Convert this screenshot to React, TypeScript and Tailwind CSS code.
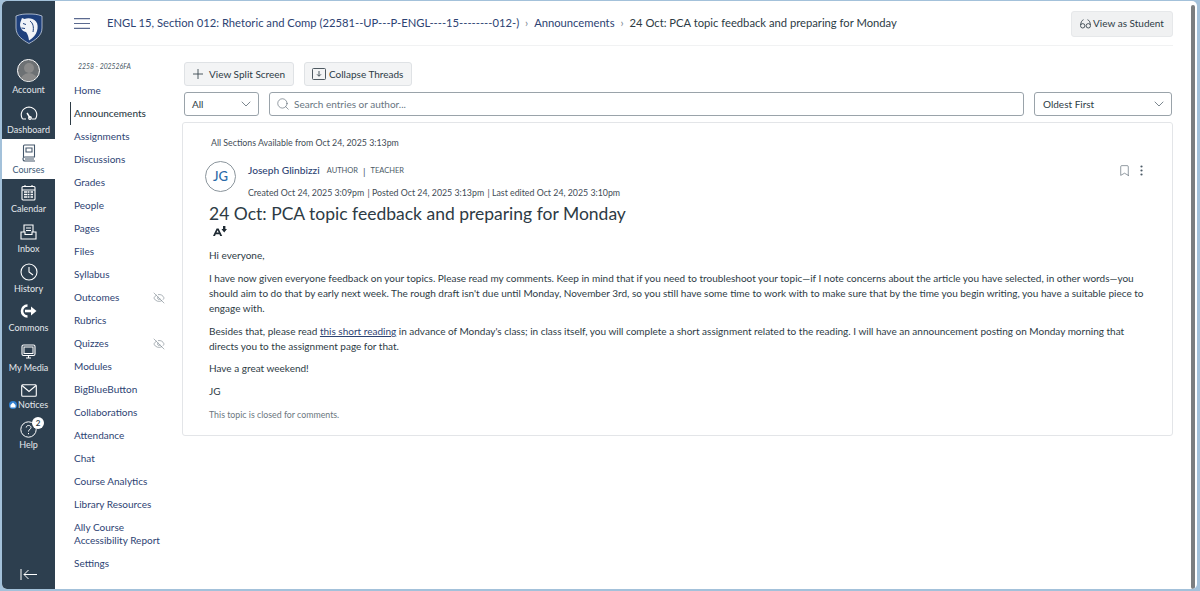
import React from "react";
import { ChevronDown, Search, Bookmark, EyeOff } from "lucide-react";

const ink = "#2d3b45";

function Shield() {
  return (
    <svg width="28" height="31" viewBox="0 0 28 31">
      <path d="M1 3 C6 1 10 1 14 1 C18 1 22 1 27 3 L27 15 C27 23 20 27 14 30.5 C8 27 1 23 1 15 Z" fill="#1e407c" stroke="#c9d3e2" strokeWidth="0.8" />
      <path d="M5.5 9 L7 5 L9.5 6 C13 4.5 18 5 21 8.5 C23 11 23 15 22 18 C21 22 18 25 14 27.5 C13.5 24 13 21.5 11 19 C8.5 18.5 6.5 17 5.5 14 C4.8 12.5 5 10.5 5.5 9 Z" fill="#f1f4f8" />
      <path d="M8 10.5 L11 11.5 M6.5 15 L10 15.5 M15 8 C18 10 19 14 18 19" stroke="#1e407c" strokeWidth="1" fill="none" />
    </svg>
  );
}

const S = { fill: "none", stroke: "currentColor", strokeWidth: 1.1 } as const;

const icons: Record<string, React.ReactNode> = {
  Dashboard: (
    <svg width="18" height="14" viewBox="0 0 18 14" {...S}>
      <path d="M2.5 13 H6 M12 13 H15.5 M2.5 13 C0 9 1 2 9 1 C17 2 18 9 15.5 13" />
      <path d="M7 7 L10.5 12.5" strokeWidth="1.4" /><circle cx="10" cy="12" r="1.4" />
    </svg>
  ),
  Courses: (
    <svg width="14" height="18" viewBox="0 0 14 18" {...S}>
      <path d="M1.5 13 V2 Q1.5 1 2.5 1 H12.5 V13 H3 Q1 13 1 15 Q1 17 3 17 H13" />
      <path d="M4 4 H10 V8 H4 Z M3 15 H12" />
    </svg>
  ),
  Calendar: (
    <svg width="15" height="17" viewBox="0 0 15 17" {...S}>
      <rect x="1" y="2.5" width="13" height="13.5" rx="1" />
      <path d="M1 6 H14 M4 1 V3 M11 1 V3" />
      <path d="M3 8 H6 M6.5 8 H8.5 M9.5 8 H12 M3 10.5 H6 M6.5 10.5 H8.5 M9.5 10.5 H12 M3 13 H6 M6.5 13 H8.5 M9.5 13 H12" strokeWidth="1.6" />
    </svg>
  ),
  Inbox: (
    <svg width="17" height="16" viewBox="0 0 17 16" {...S}>
      <path d="M4 8 V1 H13 V8 M6 4 H11 M6 6.5 H11" />
      <path d="M1 8 H5 V10.5 H12 V8 H16 V15 H1 Z" />
    </svg>
  ),
  History: (
    <svg width="18" height="18" viewBox="0 0 18 18" {...S}>
      <circle cx="9" cy="9" r="8" /><path d="M9 4 V9 L13 12" />
    </svg>
  ),
  Commons: (
    <svg width="17" height="14" viewBox="0 0 17 14">
      <path d="M7.5 1.5 A5.5 5.5 0 1 0 7.5 12.5" fill="none" stroke="#fff" strokeWidth="2.6" />
      <path d="M5 7 H12" stroke="#fff" strokeWidth="2.6" />
      <path d="M11 2.5 L16.5 7 L11 11.5 Z" fill="#fff" />
    </svg>
  ),
  "My Media": (
    <svg width="15" height="15" viewBox="0 0 15 15" {...S}>
      <rect x="1" y="1" width="13" height="10.5" rx="1.5" />
      <rect x="3" y="3" width="9" height="6.5" strokeWidth="1" />
      <path d="M5 14 H10 M7.5 11.5 V14" />
    </svg>
  ),
};

function RailItem({ label, active, h = "h-[39.7px]" }: { label: string; active?: boolean; h?: string }) {
  return (
    <div className={`flex flex-col items-center justify-center ${h} ${active ? "bg-white text-[#3b5a78]" : "text-[#e4e8ec]"}`}>
      <div className={`h-[20px] flex items-center justify-center ${active ? "text-[#44576b]" : "text-white"}`}>{icons[label]}</div>
      <span className="text-[9px] leading-[13px]">{label}</span>
    </div>
  );
}

function Rail() {
  return (
    <div className="w-[53px] shrink-0 bg-[#2d3f4f] rounded-l-[4px] flex flex-col">
      <div className="h-[52px] pt-[12px] flex justify-center"><Shield /></div>
      <div className="h-[46px] flex flex-col items-center text-[#e4e8ec] pt-[6px]">
        <div className="w-[23px] h-[23px] rounded-full border border-white bg-[#6d7174] overflow-hidden flex flex-col items-center">
          <div className="w-[10px] h-[10px] rounded-full bg-[#8a8a8a] mt-[3px] shrink-0" />
          <div className="w-[18px] h-[10px] rounded-t-full bg-[#8a8a8a] shrink-0" />
        </div>
        <span className="text-[9px] leading-[13px] mt-[1px]">Account</span>
      </div>
      <RailItem label="Dashboard" h="h-[40px]" />
      <RailItem label="Courses" active h="h-[40px]" />
      <RailItem label="Calendar" />
      <RailItem label="Inbox" />
      <RailItem label="History" />
      <RailItem label="Commons" />
      <RailItem label="My Media" />
      <div className="h-[40px] flex flex-col items-center justify-center text-[#e4e8ec]">
        <svg width="16" height="13" viewBox="0 0 16 13" fill="none" stroke="white" strokeWidth="1.1"><rect x="0.7" y="0.7" width="14.6" height="11.6" rx="1" /><path d="M1 1.5 L8 7.5 L15 1.5" /></svg>
        <div className="flex items-center gap-[1px] mt-[2px]">
          <svg width="8" height="8" viewBox="0 0 8 8"><circle cx="4" cy="4" r="4" fill="#2f7fd1" /><path d="M1.5 4 L4 1.5 L6.5 4 V6.5 H1.5 Z" fill="#fff" /></svg>
          <span className="text-[9px] leading-[12px]">Notices</span>
        </div>
      </div>
      <div className="relative h-[38px] flex flex-col items-center justify-center text-[#e4e8ec]">
        <svg width="17" height="17" viewBox="0 0 17 17" fill="none" stroke="white" strokeWidth="1"><circle cx="8.5" cy="8.5" r="7.7" /><path d="M6.2 6.5 C6.2 3.8 11 3.8 11 6.5 C11 8.4 8.5 8.2 8.5 10.5 M8.5 12 V13.2" /></svg>
        <span className="absolute left-[30px] top-[0px] w-[12px] h-[12px] rounded-full bg-white text-[#2d3b45] text-[8px] font-bold flex items-center justify-center">2</span>
        <span className="text-[9px] leading-[13px]">Help</span>
      </div>
      <div className="mt-auto h-[20px] flex justify-center">
        <svg width="17" height="11" viewBox="0 0 17 11" fill="none" stroke="white" strokeWidth="1"><path d="M1 0 V11 M17 5.5 H4 M8.5 1 L4 5.5 L8.5 10" /></svg>
      </div>
    </div>
  );
}

const nav = ["Home", "Announcements", "Assignments", "Discussions", "Grades", "People", "Pages", "Files", "Syllabus", "Outcomes", "Rubrics", "Quizzes", "Modules", "BigBlueButton", "Collaborations", "Attendance", "Chat", "Course Analytics", "Library Resources", "Ally Course\nAccessibility Report", "Settings"];

function CourseNav() {
  return (
    <div className="w-[127px] shrink-0 pt-[15px] pl-[15px]">
      <div className="italic text-[6.9px] leading-[10px] text-[#4b5a66] pl-[8px] mb-[8px]">2258 - 202526FA</div>
      {nav.map((n) => {
        const active = n === "Announcements";
        const hidden = n === "Outcomes" || n === "Quizzes";
        return (
          <div key={n} className={`flex items-center justify-between text-[10px] leading-[13px] py-[5px] pr-[17px] whitespace-pre-line ${active ? "text-[#2d3b45] border-l border-[#2d3b45] pl-[3px]" : "text-[#2d4373] pl-[4px]"}`}>
            <span className={active ? "[font-weight:500]" : ""}>{n}</span>
            {hidden && <EyeOff size={12} strokeWidth={1.1} className="text-[#6b7780]" />}
          </div>
        );
      })}
    </div>
  );
}

function Sep() {
  return <span className="w-[15px] text-center text-[#7a858e] text-[11px]">›</span>;
}

function Topbar() {
  return (
    <div className="h-[45px] shrink-0 pt-[1px] ml-[15px] mr-[24px] border-b border-[#f1f2f3] flex items-center justify-between">
      <div className="flex items-center text-[11.23px]">
        <svg width="16" height="11" viewBox="0 0 16 11" stroke="#5b6a90" strokeWidth="1.2" className="ml-[4px] mr-[17px]"><path d="M0 .6 H16 M0 5.5 H16 M0 10.4 H16" /></svg>
        <span className="text-[#2d4373]">ENGL 15, Section 012: Rhetoric and Comp (22581--UP---P-ENGL----15--------012-)</span>
        <Sep />
        <span className="text-[#2d4373]">Announcements</span>
        <Sep />
        <span className="text-[#2d3b45]">24 Oct: PCA topic feedback and preparing for Monday</span>
      </div>
      <div className="h-[26px] w-[102px] bg-[#f0f1f2] border border-[#e6e8ea] rounded-[3px] flex items-center justify-center gap-[2px] text-[10px] text-[#2d3b45]">
        <svg width="11" height="10" viewBox="0 0 11 10" fill="none" stroke="#3b4750" strokeWidth="0.9"><circle cx="2.7" cy="6.8" r="2.2" /><circle cx="8.3" cy="6.8" r="2.2" /><path d="M.6 6 C.8 3.5 1.6 1.5 3.5 .7 M10.4 6 C10.2 3.5 9.6 1.5 7.5 .7" /></svg>
        View as Student
      </div>
    </div>
  );
}

function Main() {
  return (
    <div className="flex-1 min-w-0 pt-[16px] pr-[24px]">
      <div className="flex gap-[10px] ml-[2px]">
        <div className="w-[110px] h-[24px] bg-[#f3f4f5] border border-[#dfe2e5] rounded-[3px] flex items-center pl-[8px] gap-[6px] text-[10px] text-[#2d3b45]">
          <svg width="10" height="10" viewBox="0 0 10 10" stroke="#3b4750" strokeWidth="0.9"><path d="M5 0 V10 M0 5 H10" /></svg>
          View Split Screen
        </div>
        <div className="w-[108px] h-[24px] bg-[#f3f4f5] border border-[#dfe2e5] rounded-[3px] flex items-center pl-[7px] gap-[3px] text-[10px] text-[#2d3b45]">
          <svg width="14" height="12" viewBox="0 0 14 12" fill="none" stroke="#3b4750" strokeWidth="0.9"><rect x=".5" y=".5" width="13" height="11" rx="1" /><path d="M7 3 V8 M5 6.3 L7 8.3 L9 6.3" /></svg>
          Collapse Threads
        </div>
      </div>
      <div className="flex gap-[10px] mt-[6px] ml-[2px] mr-[1px] text-[10px]">
        <div className="w-[75px] h-[24px] border border-[#9aa3aa] rounded-[3px] flex items-center justify-between pl-[7px] pr-[4px] text-[#2d3b45]">
          All <ChevronDown size={16} strokeWidth={1.1} className="text-[#4b5a66]" />
        </div>
        <div className="flex-1 h-[24px] border border-[#9aa3aa] rounded-[3px] flex items-center pl-[6px] gap-[4px] text-[#68757f]">
          <Search size={14} strokeWidth={1} className="text-[#4b5a66]" /> Search entries or author...
        </div>
        <div className="w-[138px] h-[24px] border border-[#9aa3aa] rounded-[3px] flex items-center justify-between pl-[8px] pr-[4px] text-[#2d3b45]">
          Oldest First <ChevronDown size={16} strokeWidth={1.1} className="text-[#4b5a66]" />
        </div>
      </div>
      <div className="mt-[6px] border border-[#e3e5e8] rounded-[3px] h-[314px] pl-[26px] pr-[25px] relative">
        <div className="pt-[14px] pl-[2px] text-[8.8px] leading-[12px] text-[#3f4c56]">All Sections Available from Oct 24, 2025 3:13pm</div>
        <div className="flex mt-[12px] -ml-[4px]">
          <div className="w-[31px] h-[31px] shrink-0 rounded-full border border-[#8b959c] flex items-center justify-center text-[#2a6aa8] text-[13px] [font-weight:500]">JG</div>
          <div className="ml-[12px]">
            <div className="flex items-center text-[7.5px] text-[#4b5a66] h-[14px] mt-[3px]">
              <span className="text-[10.2px] text-[#2d4373] [font-weight:500] mr-[7px]">Joseph Glinbizzi</span>
              AUTHOR
              <span className="mx-[5px] text-[10px]">|</span>
              TEACHER
            </div>
            <div className="text-[8.8px] leading-[12px] text-[#3f4c56] mt-[9px]">Created Oct 24, 2025 3:09pm &thinsp;| Posted Oct 24, 2025 3:13pm &thinsp;| Last edited Oct 24, 2025 3:10pm</div>
          </div>
        </div>
        <div className="absolute right-[29px] top-[41px] flex items-center gap-[9px] text-[#4b5a66]">
          <Bookmark size={13} strokeWidth={1.1} />
          <svg width="3" height="11" viewBox="0 0 3 11" fill="currentColor"><circle cx="1.5" cy="1.5" r="1.1" /><circle cx="1.5" cy="5.5" r="1.1" /><circle cx="1.5" cy="9.5" r="1.1" /></svg>
        </div>
        <h1 className="text-[17.5px] leading-[24px] text-[#2d3b45] mt-[3px]">24 Oct: PCA topic feedback and preparing for Monday</h1>
        <div className="h-[13px] ml-[4px]">
          <svg width="14" height="11" viewBox="0 0 14 11" fill="#1f2a33"><path d="M0 10 L3.6 2.5 H5.6 L9.2 10 H7.2 L6.4 8.2 H2.8 L2 10 Z M3.5 6.6 H5.7 L4.6 4.2 Z" /><path d="M10 0 H12.4 V3 H14 L11.2 6.4 L8.4 3 H10 Z" /></svg>
        </div>
        <div className="text-[10px] leading-[15px] text-[#2d3b45] mt-[9px]">
          <p>Hi everyone,</p>
          <p className="mt-[8px]">I have now given everyone feedback on your topics. Please read my comments. Keep in mind that if you need to troubleshoot your topic—if I note concerns about the article you have selected, in other words—you should aim to do that by early next week. The rough draft isn't due until Monday, November 3rd, so you still have some time to work with to make sure that by the time you begin writing, you have a suitable piece to engage with.</p>
          <p className="mt-[8px]">Besides that, please read <span className="text-[#2d4373] underline">this short reading</span> in advance of Monday's class; in class itself, you will complete a short assignment related to the reading. I will have an announcement posting on Monday morning that directs you to the assignment page for that.</p>
          <p className="mt-[7px]">Have a great weekend!</p>
          <p className="mt-[8px]">JG</p>
        </div>
        <div className="text-[8.8px] leading-[15px] text-[#6b7780] mt-[8px]">This topic is closed for comments.</div>
      </div>
    </div>
  );
}

export default function App() {
  return (
    <div className="w-[1200px] h-[591px] overflow-hidden bg-[#a3c1da] pt-[1px] pl-[2px] pr-[3px] pb-[2px] font-['Lato','Carlito','Noto_Sans',sans-serif]" style={{ color: ink }}>
      <div className="flex h-full bg-white rounded-[5px] overflow-hidden relative">
        <Rail />
        <div className="flex-1 min-w-0 flex flex-col">
          <Topbar />
          <div className="flex flex-1 min-h-0">
            <CourseNav />
            <Main />
          </div>
        </div>
        <div className="absolute right-[2px] top-[4px] bottom-0 w-[4px] rounded-full bg-[#7b7e80]" />
      </div>
    </div>
  );
}
